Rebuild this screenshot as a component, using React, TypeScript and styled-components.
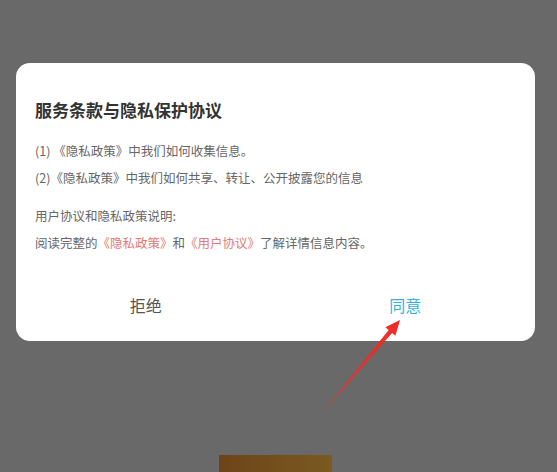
import React from "react";
import styled, { createGlobalStyle } from "styled-components";

const Global = createGlobalStyle`
    html, body {
        margin: 0;
        padding: 0;
        background: #696969;
        overflow: hidden;
    }
    body {
        font-family: "Noto Sans CJK SC", "Noto Sans", sans-serif;
    }
`;

const Tela = styled.div`
    position: relative;
    width: 557px;
    height: 472px;
    padding-top: 63px;
    box-sizing: border-box;
    overflow: hidden;
`;

const Dialogo = styled.div`
    margin-left: 16px;
    width: 519px;
    height: 278px;
    background: #ffffff;
    border-radius: 14px;
    padding: 35px 19px 0 19px;
    box-sizing: border-box;
    display: flex;
    flex-direction: column;
`;

const Titulo = styled.h2`
    margin: 0 0 15px 0;
    font-size: 17px;
    line-height: 24px;
    font-weight: 700;
    color: #333333;
`;

const Linha = styled.p<{ $espaco?: number }>`
    margin: ${p => p.$espaco || 0}px 0 0 0;
    font-size: 12.5px;
    line-height: 27px;
    color: #666666;
    white-space: nowrap;
`;

const Link = styled.span`
    color: #e57878;
`;

const Botoes = styled.div`
    margin: 13px -19px 0 -19px;
    height: 71px;
    display: flex;
`;

const Botao = styled.button<{ $confirma?: boolean }>`
    flex: 1;
    border: none;
    background: transparent;
    font-family: inherit;
    font-size: 16px;
    color: ${p => (p.$confirma ? "#35b2e0" : "#555555")};
    padding: 0;
    cursor: pointer;
`;

const Fundo = styled.div`
    margin: 114px 0 0 219px;
    width: 113px;
    height: 40px;
    background: linear-gradient(90deg, #6d4419, #7a5a20);
`;

const Seta = styled.svg`
    position: absolute;
    left: 0;
    top: 0;
    pointer-events: none;
`;

const App = () => {
    return (
        <>
            <Global />
            <Tela>
                <Dialogo>
                    <Titulo>服务条款与隐私保护协议</Titulo>
                    <Linha>(1) 《隐私政策》中我们如何收集信息。</Linha>
                    <Linha>(2)《隐私政策》中我们如何共享、转让、公开披露您的信息</Linha>
                    <Linha $espaco={11}>用户协议和隐私政策说明:</Linha>
                    <Linha>
                        阅读完整的<Link>《隐私政策》</Link>和<Link>《用户协议》</Link>了解详情信息内容。
                    </Linha>
                    <Botoes>
                        <Botao>拒绝</Botao>
                        <Botao $confirma>同意</Botao>
                    </Botoes>
                </Dialogo>
                <Fundo />
                <Seta width="557" height="472" viewBox="0 0 557 472">
                    <defs>
                        <linearGradient id="seta" x1="318" y1="418" x2="400" y2="320" gradientUnits="userSpaceOnUse">
                            <stop offset="0" stopColor="#e8322b" stopOpacity="0.25" />
                            <stop offset="0.35" stopColor="#e8322b" stopOpacity="0.9" />
                            <stop offset="1" stopColor="#ec2a22" />
                        </linearGradient>
                    </defs>
                    <polygon
                        points="317.5,418.5 392.1,332.9 395.4,335.7 400,320 385.4,327.3 388.7,330.1"
                        fill="url(#seta)"
                    />
                </Seta>
            </Tela>
        </>
    );
};

export default App;
